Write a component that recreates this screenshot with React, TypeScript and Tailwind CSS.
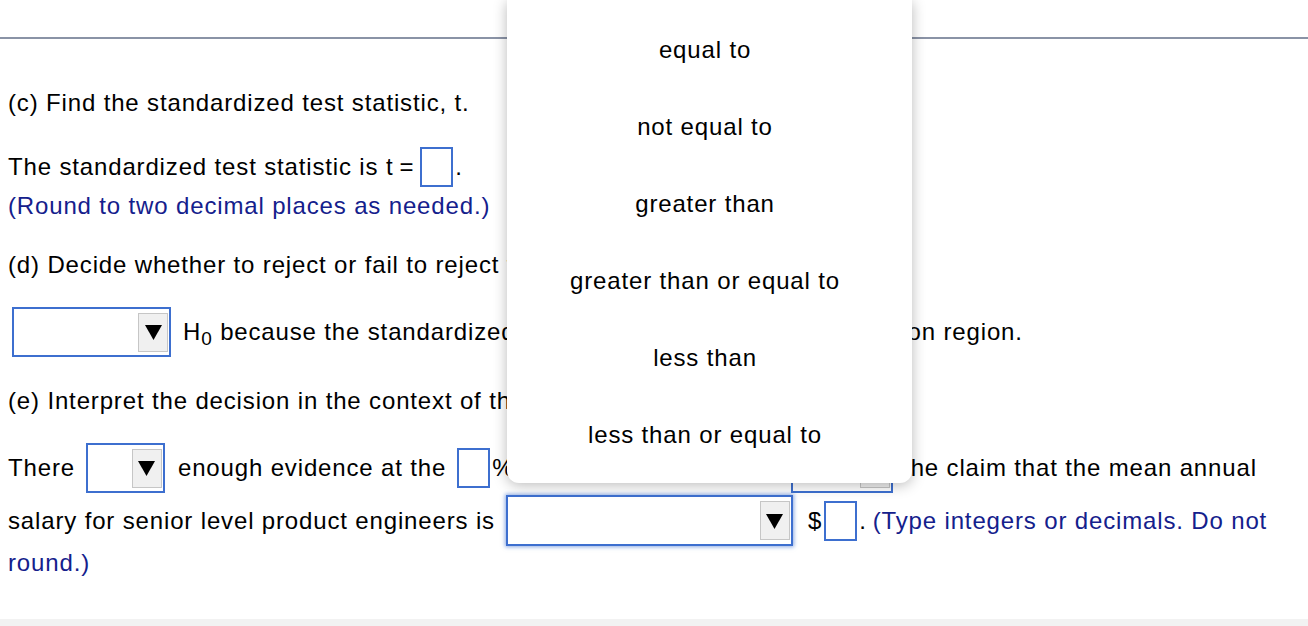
import React from 'react'

// Pearson-style stats question with an open dropdown over it

function Box() {
  return <span className="inline-block w-[33px] h-[40px] border-2 border-[#3d6fcf] bg-white align-middle" />
}

function Select({ w, h = 50, focused = false }: { w: number; h?: number; focused?: boolean }) {
  return (
    <span
      className={
        'inline-flex items-center justify-end pr-[1px] border-2 border-[#3d6fcf] bg-white ' +
        (focused ? 'shadow-[0_0_4px_1px_rgba(61,111,207,0.6)]' : '')
      }
      style={{ width: w, height: h }}
    >
      <span className="w-[30px] h-[39px] bg-[#f0f0f0] border border-[#c6c6c6] flex items-center justify-center">
        <svg width="17" height="16" viewBox="0 0 17 16">
          <polygon points="0,1 17,1 8.5,16" fill="#000" />
        </svg>
      </span>
    </span>
  )
}

const options = [
  'equal to',
  'not equal to',
  'greater than',
  'greater than or equal to',
  'less than',
  'less than or equal to',
]

export default function App() {
  return (
    <div className="relative w-[1308px] h-[626px] overflow-hidden bg-white text-[24px] tracking-[0.85px] text-black font-['Liberation_Sans',Arial,sans-serif]">
      <div className="h-[37px]" />
      <div className="h-[2px] bg-[#8a93a6]" />

      <div className="pl-[8px]">
        <div className="mt-[52px] h-[24px] flex items-center">(c) Find the standardized test statistic, t.</div>

        <div className="mt-[32px] h-[40px] flex items-center">
          <span>The standardized test statistic is t</span>
          <span className="ml-[6px] mr-[6px]">=</span>
          <Box />
          <span className="ml-[2px]">.</span>
        </div>
        <div className="mt-[7px] h-[24px] flex items-center text-[#14208c]">(Round to two decimal places as needed.)</div>

        <div className="mt-[35px] h-[24px] flex items-center">
          (d) Decide whether to reject or fail to reject the null hypothesis.
        </div>

        <div className="mt-[30px] h-[50px] flex items-center whitespace-nowrap">
          <span className="ml-[4px]"><Select w={159} /></span>
          <span className="ml-[12px]">
            H<sub className="text-[19px] relative top-[5px] align-baseline">0</sub> because the standardized test statistic
            <span className="inline-block w-[72px]" /> is in the rejection region.
          </span>
        </div>

        <div className="mt-[32px] h-[24px] flex items-center">
          (e) Interpret the decision in the context of the original claim.
        </div>

        <div className="mt-[30px] h-[50px] flex items-center whitespace-nowrap">
          <span>There</span>
          <span className="ml-[11px]"><Select w={79} /></span>
          <span className="ml-[13px]">enough evidence at the</span>
          <span className="ml-[11px]"><Box /></span>
          <span className="ml-[2px]">% level of significance to</span>
          <span className="ml-[14px]"><Select w={102} /></span>
          <span className="ml-[10px]">the claim that the mean annual</span>
        </div>

        <div className="mt-[2px] h-[51px] flex items-center whitespace-nowrap">
          <span>salary for senior level product engineers is</span>
          <span className="ml-[11px]"><Select w={287} h={51} focused /></span>
          <span className="ml-[15px]">$</span>
          <span className="ml-[2px]"><Box /></span>
          <span className="ml-[2px]">.</span>
          <span className="ml-[6px] text-[#14208c]">(Type integers or decimals. Do not</span>
        </div>

        <div className="mt-[5px] h-[24px] flex items-center text-[#14208c]">round.)</div>
      </div>

      <div className="absolute left-0 right-0 bottom-0 h-[7px] bg-[#f2f2f2]" />

      {/* open dropdown list */}
      <div className="absolute left-[507px] top-0 w-[405px] h-[483px] bg-white rounded-b-[12px] shadow-[0_2px_14px_rgba(0,0,0,0.28)] pt-[11px] pr-[9px]">
        {options.map(o => (
          <div key={o} className="h-[77px] flex items-center justify-center">{o}</div>
        ))}
      </div>
    </div>
  )
}
